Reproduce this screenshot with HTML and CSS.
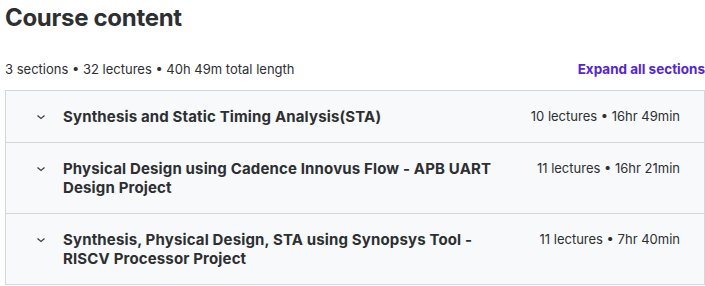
FILE: index.html
```html
<!DOCTYPE html>
<html lang="en">

    <head>
        <meta charset="UTF-8">
        <meta name="viewport" content="width=device-width, initial-scale=1.0">
        <title>Course content</title>
        <link rel="stylesheet" href="styles.css">
    </head>

    <body>
        <h2 class="title">Course content</h2>
        <div class="summary">
            <span class="stats">3 sections • 32 lectures • 40h 49m total length</span>
            <button class="expand">Expand all sections</button>
        </div>
        <div class="sections">
            <div class="section">
                <svg class="chevron" viewBox="0 0 12 12" width="12" height="12"><path d="M2.5 4.5l3.5 3 3.5-3" /></svg>
                <span class="section-title">Synthesis and Static Timing Analysis(STA)</span>
                <span class="section-meta">10 lectures • 16hr 49min</span>
            </div>
            <div class="section">
                <svg class="chevron" viewBox="0 0 12 12" width="12" height="12"><path d="M2.5 4.5l3.5 3 3.5-3" /></svg>
                <span class="section-title">Physical Design using Cadence Innovus Flow - APB UART Design Project</span>
                <span class="section-meta">11 lectures • 16hr 21min</span>
            </div>
            <div class="section">
                <svg class="chevron" viewBox="0 0 12 12" width="12" height="12"><path d="M2.5 4.5l3.5 3 3.5-3" /></svg>
                <span class="section-title">Synthesis, Physical Design, STA using Synopsys Tool - RISCV Processor Project</span>
                <span class="section-meta">11 lectures • 7hr 40min</span>
            </div>
        </div>
    </body>

</html>
```

FILE: styles.css
```css
body {
    font-family: Inter, "Noto Sans", sans-serif;
    margin: 0;
    padding: 0 0 0 5px;
    background-color: #fff;
    color: #2d2f31;
}

.title {
    margin: 0;
    padding-top: 2px;
    font-size: 24px;
    line-height: 32px;
    font-weight: 700;
    letter-spacing: -0.3px;
}

.summary {
    display: flex;
    justify-content: space-between;
    align-items: center;
    margin-top: 24px;
    height: 22px;
}

.stats {
    font-size: 13px;
}

.expand {
    border: none;
    background: none;
    padding: 0;
    font-family: inherit;
    font-size: 13.5px;
    font-weight: 700;
    color: #5624d0;
    cursor: pointer;
}

.sections {
    margin-top: 10px;
    width: 698px;
    border: 1px solid #d1d7dc;
    border-bottom: none;
}

.section {
    display: flex;
    align-items: flex-start;
    padding: 16px 24px 16px 29px;
    background-color: #f7f9fa;
    border-bottom: 1px solid #d1d7dc;
}

.chevron {
    flex: none;
    margin-top: 4px;
    margin-right: 16px;
    fill: none;
    stroke: #3e4143;
    stroke-width: 1.3;
}

.section-title {
    flex: 1;
    max-width: 440px;
    font-size: 15px;
    font-weight: 700;
    line-height: 19px;
    letter-spacing: 0.15px;
}

.section-meta {
    margin-left: auto;
    font-size: 13px;
    line-height: 19px;
    white-space: nowrap;
}
```
